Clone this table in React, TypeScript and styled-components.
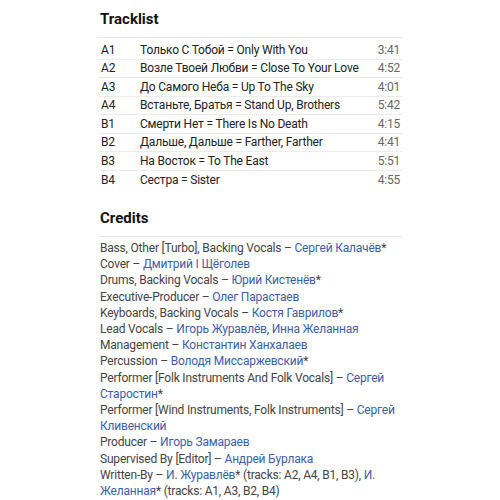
import React from 'react';
import styled, { createGlobalStyle } from 'styled-components';

const tracks = [
  { pos: 'A1', title: 'Только С Тобой = Only With You', time: '3:41' },
  { pos: 'A2', title: 'Возле Твоей Любви = Close To Your Love', time: '4:52' },
  { pos: 'A3', title: 'До Самого Неба = Up To The Sky', time: '4:01' },
  { pos: 'A4', title: 'Встаньте, Братья = Stand Up, Brothers', time: '5:42' },
  { pos: 'B1', title: 'Смерти Нет = There Is No Death', time: '4:15' },
  { pos: 'B2', title: 'Дальше, Дальше = Farther, Farther', time: '4:41' },
  { pos: 'B3', title: 'На Восток = To The East', time: '5:51' },
  { pos: 'B4', title: 'Сестра = Sister', time: '4:55' },
];

type Part = { text: string; link?: boolean };

const credits: { role: string; parts: Part[] }[] = [
  { role: 'Bass, Other [Turbo], Backing Vocals', parts: [{ text: 'Сергей Калачёв', link: true }, { text: '*' }] },
  { role: 'Cover', parts: [{ text: 'Дмитрий I Щёголев', link: true }] },
  { role: 'Drums, Backing Vocals', parts: [{ text: 'Юрий Кистенёв', link: true }, { text: '*' }] },
  { role: 'Executive-Producer', parts: [{ text: 'Олег Парастаев', link: true }] },
  { role: 'Keyboards, Backing Vocals', parts: [{ text: 'Костя Гаврилов', link: true }, { text: '*' }] },
  {
    role: 'Lead Vocals',
    parts: [{ text: 'Игорь Журавлёв', link: true }, { text: ', ' }, { text: 'Инна Желанная', link: true }],
  },
  { role: 'Management', parts: [{ text: 'Константин Ханхалаев', link: true }] },
  { role: 'Percussion', parts: [{ text: 'Володя Миссаржевский', link: true }, { text: '*' }] },
  {
    role: 'Performer [Folk Instruments And Folk Vocals]',
    parts: [{ text: 'Сергей Старостин', link: true }, { text: '*' }],
  },
  {
    role: 'Performer [Wind Instruments, Folk Instruments]',
    parts: [{ text: 'Сергей Кливенский', link: true }],
  },
  { role: 'Producer', parts: [{ text: 'Игорь Замараев', link: true }] },
  { role: 'Supervised By [Editor]', parts: [{ text: 'Андрей Бурлака', link: true }] },
  {
    role: 'Written-By',
    parts: [
      { text: 'И. Журавлёв', link: true },
      { text: '* (tracks: A2, A4, B1, B3), ' },
      { text: 'И. Желанная', link: true },
      { text: '* (tracks: A1, A3, B2, B4)' },
    ],
  },
];

function App() {
  return (
    <>
      <GlobalStyle />
      <Page>
        <Section>
          <Heading>Tracklist</Heading>
          <TrackTable>
            {tracks.map((t) => (
              <TrackRow key={t.pos}>
                <Pos>{t.pos}</Pos>
                <Title>{t.title}</Title>
                <Duration>{t.time}</Duration>
              </TrackRow>
            ))}
          </TrackTable>
        </Section>
        <Section>
          <Heading>Credits</Heading>
          <CreditList>
            {credits.map((c) => (
              <CreditItem key={c.role}>
                {c.role} –{' '}
                {c.parts.map((p, i) =>
                  p.link ? <ArtistLink key={i}>{p.text}</ArtistLink> : <span key={i}>{p.text}</span>
                )}
              </CreditItem>
            ))}
          </CreditList>
        </Section>
      </Page>
    </>
  );
}

export default App;

const GlobalStyle = createGlobalStyle`
  body {
    margin: 0;
    background: #fff;
    font-family: Roboto, "Noto Sans", sans-serif;
  }
`;

const Page = styled.div`
  width: 304px;
  margin: 0 0 0 98px;
  padding-top: 10px;
`;

const Section = styled.section`
  & + & {
    margin-top: 20px;
  }
`;

const Heading = styled.h2`
  margin: 0;
  padding: 0 0 9px 2px;
  font-size: 15px;
  font-weight: 700;
  color: #111;
  line-height: 18px;
  border-bottom: 1px solid #e8e8e8;
`;

const TrackTable = styled.div`
  display: flex;
  flex-direction: column;
  padding-top: 3px;
`;

const TrackRow = styled.div`
  box-sizing: border-box;
  display: grid;
  grid-template-columns: 39px 1fr auto;
  align-items: center;
  height: 18.5px;
  padding: 0 2px 0 3px;
  font-size: 12px;
  letter-spacing: -0.2px;
  color: #222;
  border-bottom: 1px solid #ececec;

  &:last-child {
    border-bottom: none;
  }
`;

const Pos = styled.span``;

const Title = styled.span`
  white-space: nowrap;
`;

const Duration = styled.span`
  color: #666;
  text-align: right;
`;

const CreditList = styled.ul`
  list-style: none;
  margin: 0;
  padding: 3px 0 0 2px;
`;

const CreditItem = styled.li`
  font-size: 12px;
  letter-spacing: -0.2px;
  line-height: 16.2px;
  color: #444;
`;

const ArtistLink = styled.a`
  color: #3b5eb0;
  text-decoration: none;
  cursor: pointer;
`;
